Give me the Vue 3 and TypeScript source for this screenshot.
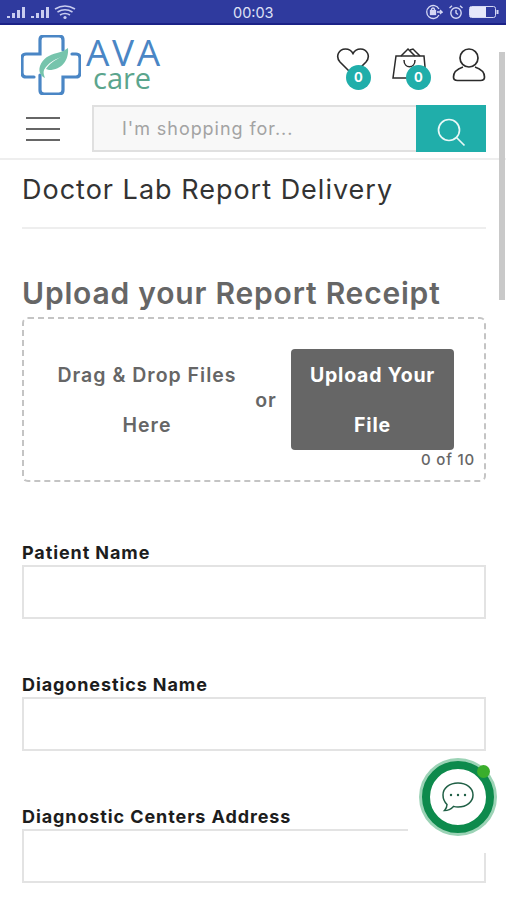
<script setup lang="ts">
const fields = ['Patient Name', 'Diagonestics Name', 'Diagnostic Centers Address'];
</script>

<template>
  <div class="page">
    <div class="status">
      <div class="status-left">
        <svg width="70" height="16" viewBox="0 0 70 16" fill="#c9cdf0">
          <rect x="0" y="12" width="3" height="2" /><rect x="5" y="9" width="3" height="5" /><rect x="10" y="6" width="3" height="8" /><rect x="15" y="3" width="3" height="11" />
          <rect x="24" y="12" width="3" height="2" /><rect x="29" y="9" width="3" height="5" /><rect x="34" y="6" width="3" height="8" /><rect x="39" y="3" width="3" height="11" />
          <path d="M48 5q10-6 20 0M50.500 8q7.500-4.500 15 0M53 11q5-3 10 0" fill="none" stroke="#c9cdf0" stroke-width="1.600" />
          <circle cx="58" cy="13.500" r="1.600" />
        </svg>
      </div>
      <span class="clock">00:03</span>
      <div class="status-right">
        <svg width="18" height="16" viewBox="0 0 18 16" fill="none" stroke="#d5d8f4" stroke-width="1.300">
          <path d="M14 11a6.500 6.500 0 1 1 0-6" />
          <path d="M12 8h5l-2-2m2 2-2 2" />
          <rect x="5.500" y="6.500" width="5" height="4" fill="#d5d8f4" />
          <path d="M6.500 6.500v-1a1.500 1.500 0 0 1 3 0v1" />
        </svg>
        <svg width="16" height="16" viewBox="0 0 16 16" fill="none" stroke="#d5d8f4" stroke-width="1.400">
          <circle cx="8" cy="9" r="5.200" />
          <path d="M8 6v3l2 1.500M1.500 4 4 1.800M14.500 4 12 1.800" />
        </svg>
        <svg width="30" height="14" viewBox="0 0 30 14">
          <rect x="0.500" y="1.500" width="26" height="11" rx="2" fill="none" stroke="#d5d8f4" />
          <rect x="1" y="2" width="16" height="10" fill="#e6e8fa" />
          <rect x="27.500" y="5" width="2" height="4" fill="#d5d8f4" />
        </svg>
      </div>
    </div>

    <header class="header">
      <div class="top-row">
        <div class="logo">
          <svg width="60" height="60" viewBox="0 0 60 60" fill="none">
            <path d="M13 42H5q-4 0-4-4V23q0-4 4-4h14V5q0-4 4-4h15q4 0 4 4v10" stroke="#4a86c5" stroke-width="3.200" stroke-linecap="round" />
            <path d="M51 19h4q4 0 4 4v15q0 4-4 4H42v13q0 4-4 4H23q-4 0-4-4V40" stroke="#4a86c5" stroke-width="3.200" stroke-linecap="round" />
            <path d="M47 13c1 12-6 22-19 22l-3-1c3-5 9-9 15-12-7 3-13 6-17 13-1 3 0 5 1 8-4-2-7-6-5-12 3-8 9-11 17-13 5-1 8-3 11-5z" fill="#76c4ac" />
          </svg>
          <div class="logo-text">
            <span class="ava">AVA</span>
            <span class="care">care</span>
          </div>
        </div>
        <div class="actions">
          <div class="action heart">
            <svg width="34" height="30" viewBox="0 0 34 30" fill="none" stroke="#2b2b2b" stroke-width="1.600">
              <path d="M17 28 4 15C-1 9 3 2 9.500 2c3.500 0 6 1.800 7.500 4.500C18.500 3.800 21 2 24.500 2 31 2 35 9 30 15z" />
            </svg>
            <span class="count">0</span>
          </div>
          <div class="action bag">
            <svg width="36" height="34" viewBox="0 0 36 34" fill="none" stroke="#2b2b2b" stroke-width="1.500">
              <path d="M4 9h28l2 22H1z" />
              <path d="M9 9l7-7 7 7M18 3l3-1 7 7" />
              <path d="M12 13c0 9 11 9 11 0" />
            </svg>
            <span class="count">0</span>
          </div>
          <svg width="34" height="36" viewBox="0 0 34 36" fill="none" stroke="#2b2b2b" stroke-width="1.700">
            <circle cx="17" cy="11" r="9" />
            <path d="M11 20C5 22 1.500 26 1.500 30c0 2.500 1.500 3.500 4 3.500h23c2.500 0 4-1 4-3.500 0-4-3.500-8-9.500-10" />
          </svg>
        </div>
      </div>
      <div class="search-row">
        <div class="burger"><i></i><i></i><i></i></div>
        <div class="search">
          <span class="placeholder">I'm shopping for...</span>
          <button class="search-btn">
            <svg width="30" height="30" viewBox="0 0 30 30" fill="none" stroke="#e8f8f7" stroke-width="1.700">
              <circle cx="13" cy="13" r="10.500" />
              <path d="m20.500 20.500 8 8" />
            </svg>
          </button>
        </div>
      </div>
    </header>

    <main class="content">
      <h1 class="title">Doctor Lab Report Delivery</h1>
      <h2 class="upload-title">Upload your Report Receipt</h2>
      <div class="dropzone">
        <div class="drop-text">Drag &amp; Drop Files Here</div>
        <div class="or">or</div>
        <div class="upload-btn">Upload Your File</div>
        <span class="limit">0 of 10</span>
      </div>
      <div class="fields">
        <div v-for="f in fields" :key="f" class="field">
          <label>{{ f }}</label>
          <div class="input"></div>
        </div>
      </div>
    </main>

    <div class="scroll-thumb"></div>

    <div class="chat-wrap">
      <div class="chat">
        <svg width="36" height="36" viewBox="0 0 36 36" fill="none" stroke="#1f5f45" stroke-width="1.500">
          <path d="M18 4c8.500 0 15 5 15 12s-6.500 12-15 12c-1.500 0-3-.2-4.500-.6C11 30 8 31.500 4.500 31.500c1.500-1.500 2.500-3.500 2.500-6-2.500-2.500-4-5.800-4-9.500C3 9 9.500 4 18 4z" />
          <circle cx="11" cy="16" r="1.200" fill="#1f5f45" stroke="none" />
          <circle cx="18" cy="16" r="1.200" fill="#1f5f45" stroke="none" />
          <circle cx="25" cy="16" r="1.200" fill="#1f5f45" stroke="none" />
        </svg>
        <span class="online"></span>
      </div>
    </div>
  </div>
</template>

<style scoped>
.page {
  position: relative;
  width: 506px;
  height: 900px;
  overflow: hidden;
  background: #fff;
  font-family: Inter, "Open Sans", "Liberation Sans", sans-serif;
  color: #666;
}

.status {
  display: flex;
  align-items: center;
  justify-content: space-between;
  height: 25px;
  padding: 0 7px;
  box-sizing: border-box;
  background: #2f3a9e;
  border-bottom: 2px solid #1b2287;
  position: relative;
}

.status-left,
.status-right {
  display: flex;
  align-items: center;
  gap: 5px;
}

.clock {
  position: absolute;
  left: 233px;
  top: 4px;
  font-size: 14.5px;
  color: #dfe1f5;
}

.header {
  height: 135px;
  box-sizing: border-box;
  border-bottom: 2px solid #eee;
  padding-right: 20px;
}

.top-row {
  display: flex;
  justify-content: space-between;
  height: 80px;
  padding-left: 21px;
}

.logo {
  display: flex;
  margin-top: 10px;
  height: 60px;
}

.logo-text {
  display: flex;
  flex-direction: column;
  margin-left: 5px;
  font-family: "Open Sans", sans-serif;
}

.ava {
  font-size: 37px;
  line-height: 30px;
  color: #4a86c5;
  letter-spacing: 2.6px;
  margin-top: 2px;
}

.care {
  font-size: 29px;
  line-height: 22px;
  color: #5ba58d;
  margin-left: 7px;
}

.actions {
  display: flex;
  align-items: flex-start;
  padding-top: 22px;
  gap: 24px;
}

.action {
  position: relative;
  display: flex;
}

.heart {
  margin-right: -2px;
}

.count {
  position: absolute;
  right: -1px;
  bottom: -13px;
  width: 25px;
  height: 25px;
  border-radius: 50%;
  background: #20aeaa;
  color: #fff;
  font-size: 13px;
  font-weight: 700;
  line-height: 25px;
  text-align: center;
}

.bag .count {
  right: -3px;
  bottom: -9px;
}

.search-row {
  display: flex;
  align-items: center;
  padding-left: 26px;
}

.burger {
  display: flex;
  flex-direction: column;
  justify-content: space-between;
  width: 34px;
  height: 24px;
  margin-right: 32px;
}

.burger i {
  display: block;
  height: 2px;
  background: #666;
}

.search {
  display: flex;
  flex: 1;
  height: 47px;
  box-sizing: border-box;
  border: 2px solid #e0e0e0;
  border-right: 0;
  background: #f8f8f8;
  align-items: center;
  justify-content: space-between;
}

.placeholder {
  margin-left: 28px;
  font-size: 18px;
  letter-spacing: 0.95px;
  color: #a3a3a3;
}

.search-btn {
  display: flex;
  align-items: center;
  justify-content: center;
  width: 70px;
  height: 47px;
  margin: -2px 0;
  padding: 6px 0 0;
  border: 0;
  background: #20aeaa;
}

.content {
  padding: 0 20px 0 22px;
}

.title {
  margin: 0;
  padding: 14px 0 21px;
  font-size: 27px;
  line-height: 32px;
  font-weight: 400;
  letter-spacing: 1px;
  color: #333;
  border-bottom: 2px solid #eee;
}

.upload-title {
  margin: 44px 0 0;
  font-size: 30px;
  line-height: 40px;
  font-weight: 600;
  letter-spacing: 0.8px;
  color: #666;
}

.dropzone {
  position: relative;
  display: flex;
  align-items: center;
  height: 165px;
  margin-top: 4px;
  box-sizing: border-box;
  border: 2px dashed #c4c4c4;
  border-radius: 6px;
  padding: 0 30px 0 31px;
  font-size: 19.5px;
  line-height: 50px;
  font-weight: 600;
  letter-spacing: 1px;
  text-align: center;
}

.drop-text {
  width: 184px;
}

.or {
  width: 50px;
  margin-left: 2px;
}

.upload-btn {
  flex: 1;
  height: 101px;
  box-sizing: border-box;
  padding-top: 1px;
  border-radius: 4px;
  background: #666;
  color: #fff;
  font-weight: 700;
  letter-spacing: 0.8px;
}

.limit {
  position: absolute;
  right: 9px;
  bottom: 10px;
  font-size: 15px;
  line-height: 20px;
  font-weight: 500;
  letter-spacing: 0.8px;
}

.fields {
  display: flex;
  flex-direction: column;
  gap: 55px;
  margin-top: 60px;
}

.field label {
  display: block;
  margin-bottom: 1px;
  font-size: 18px;
  line-height: 22px;
  font-weight: 700;
  letter-spacing: 0.9px;
  color: #1d1d1d;
}

.input {
  height: 54px;
  box-sizing: border-box;
  border: 2px solid #e3e3e3;
}

.scroll-thumb {
  position: absolute;
  right: 1px;
  top: 52px;
  width: 6px;
  height: 248px;
  background: #c9c9c9;
}

/* white patch round the chat bubble cuts the field under it */
.chat-wrap {
  position: absolute;
  left: 408px;
  top: 755px;
  width: 92px;
  height: 98px;
  padding: 6px 0 0 14px;
  box-sizing: border-box;
  background: #fff;
}

.chat {
  position: relative;
  display: flex;
  align-items: center;
  justify-content: center;
  width: 72px;
  height: 72px;
  box-sizing: border-box;
  border-radius: 50%;
  background: #fff;
  border: 8px solid #0d8a4c;
  box-shadow: 0 0 0 3px #9cd3b6;
}

.online {
  position: absolute;
  top: -4px;
  left: 47px;
  width: 13px;
  height: 13px;
  border-radius: 50%;
  background: #3aae2c;
}
</style>
